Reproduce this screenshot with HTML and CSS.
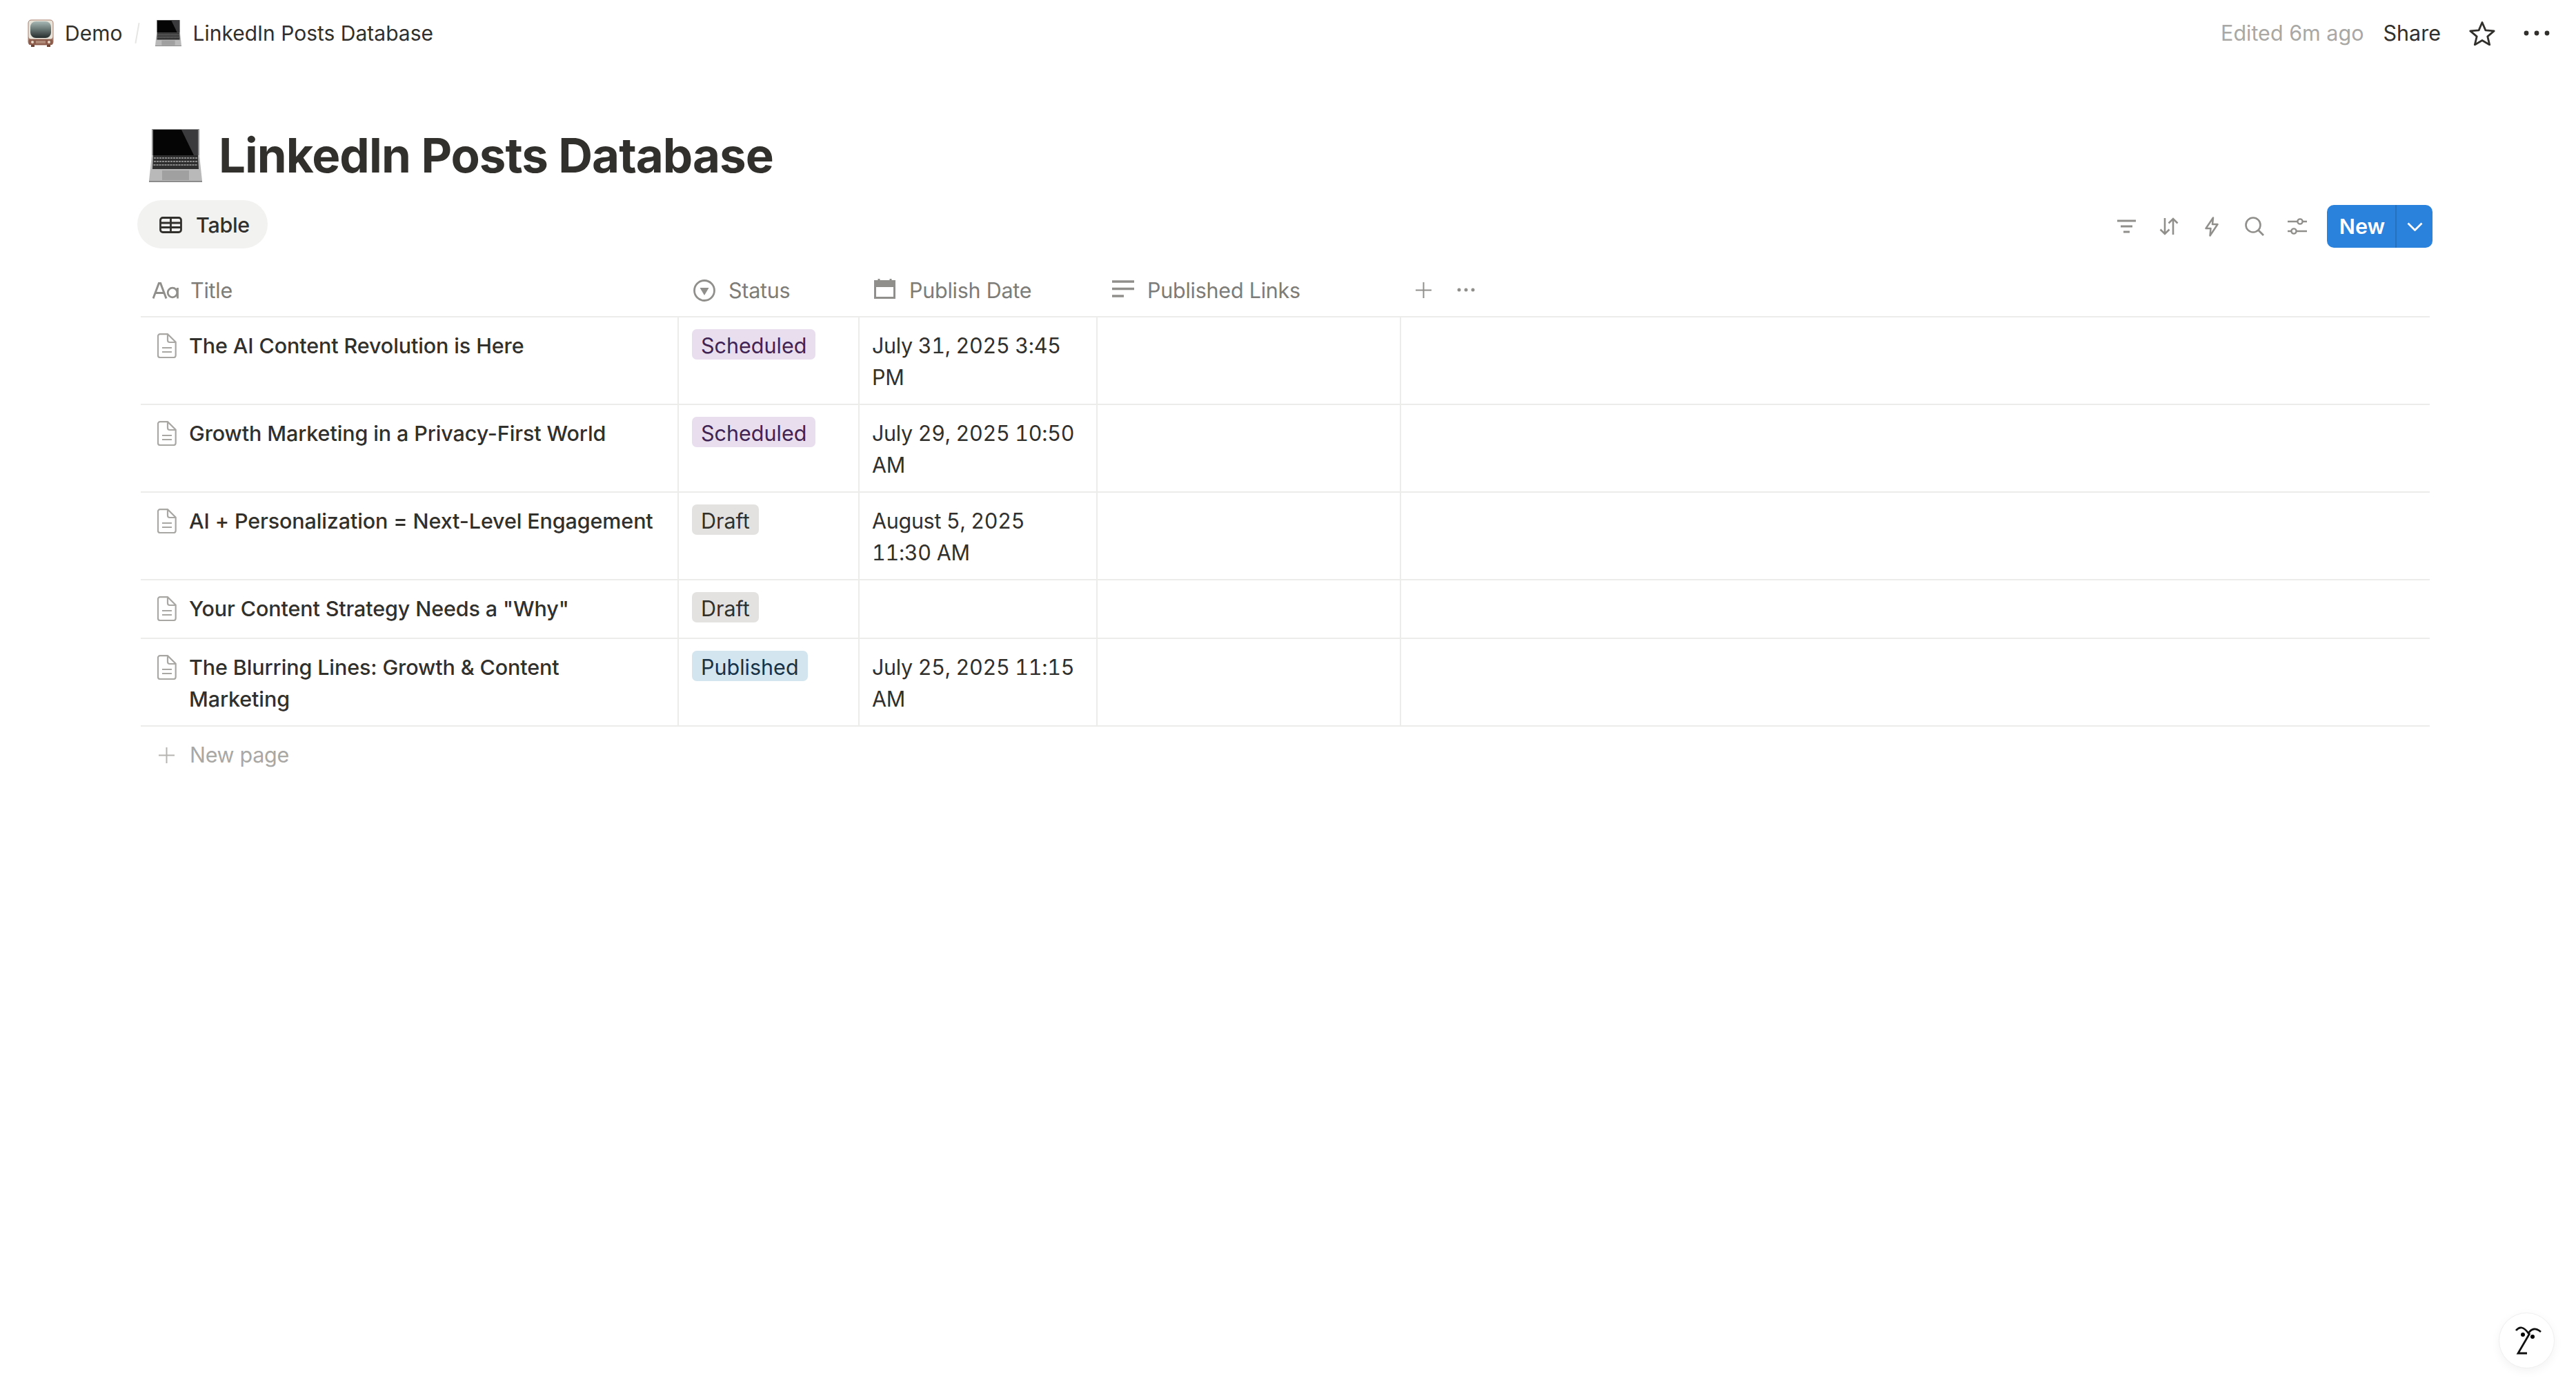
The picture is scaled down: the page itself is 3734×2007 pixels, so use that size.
FILE: index.html
```html
<!DOCTYPE html>
<html lang="en">
<head>
<meta charset="utf-8">
<title>LinkedIn Posts Database</title>
<link rel="stylesheet" href="styles.css">
</head>
<body>
<header class="topbar">
  <nav class="crumbs">
    <svg class="crumb-icon" viewBox="0 0 38 40"><defs><linearGradient id="tvscreen" x1="0" y1="0" x2="0" y2="1"><stop offset="0" stop-color="#a8b8b4"/><stop offset="0.45" stop-color="#6c7b78"/><stop offset="1" stop-color="#262c2c"/></linearGradient></defs><rect x="0.500" y="0.500" width="37" height="37" rx="5" fill="#a87f6e"/><rect x="1.500" y="1.500" width="35" height="27" rx="4" fill="#e9e4da"/><rect x="4" y="3" width="30" height="24" rx="8" fill="url(#tvscreen)"/><rect x="1.500" y="29" width="35" height="8" rx="2" fill="#8c5d4c"/><rect x="12" y="31" width="14" height="4" fill="#b08a78"/><circle cx="7" cy="33" r="2" fill="#e8d8c8"/><circle cx="31" cy="33" r="2" fill="#e8d8c8"/><rect x="5" y="37" width="5" height="3" fill="#6b4436"/><rect x="28" y="37" width="5" height="3" fill="#6b4436"/></svg>
    <span class="crumb-text">Demo</span>
    <span class="crumb-sep"></span>
    <svg class="crumb-icon" viewBox="0 0 77 77"><use href="#laptop"/></svg>
    <span class="crumb-text">LinkedIn Posts Database</span>
  </nav>
  <div class="top-actions">
    <span class="edited">Edited 6m ago</span>
    <span class="share">Share</span>
    <svg class="star" viewBox="0 0 38 36"><path d="M19 2.500l4.900 11.400 12.300 1-9.400 8 2.900 12-10.700-6.400-10.700 6.400 2.900-12-9.400-8 12.300-1z" fill="none" stroke="#32302c" stroke-width="2.800" stroke-linejoin="round"/></svg>
    <svg class="more" viewBox="0 0 38 8"><circle cx="4" cy="4" r="3.400"/><circle cx="19" cy="4" r="3.400"/><circle cx="34" cy="4" r="3.400"/></svg>
  </div>
</header>

<svg class="defs" width="0" height="0" aria-hidden="true">
  <symbol id="laptop" viewBox="0 0 77 77">
    <rect x="4" y="0" width="69" height="38" fill="#8f8f8f"/>
    <path d="M6 1h65v37H6z" fill="#050505"/>
    <path d="M47 1h24v37h-6z" fill="#3b3b3d"/>
    <path d="M4 38h69l4 37H0z" fill="#b9b9b9"/>
    <path d="M6 38h65l1 20H5z" fill="#2e2e2e"/>
    <path d="M7 42h63M7 47h63M6.500 52h64" stroke="#8a8a8a" stroke-width="2" stroke-dasharray="3 1"/>
    <rect x="19" y="60" width="39" height="14" fill="#a0a0a0"/>
    <path d="M0 75h77v2H0z" fill="#8b8b8b"/>
  </symbol>
  <symbol id="doc" viewBox="0 0 28 36">
    <path d="M4 1.200h11l11.700 11.500v19.300a3 3 0 0 1-3 3H4a3 3 0 0 1-3-3V4.200a3 3 0 0 1 3-3z" fill="none" stroke="#a8a7a4" stroke-width="2.200"/>
    <path d="M15 1.500v8.500a3 3 0 0 0 3 3h8.500M7 21h14M7 27h14" fill="none" stroke="#a8a7a4" stroke-width="2.200"/>
  </symbol>
</svg>

<main class="page">
  <h1 class="page-title">
    <svg class="title-icon" viewBox="0 0 77 77"><use href="#laptop"/></svg>
    <span>LinkedIn Posts Database</span>
  </h1>

  <div class="toolbar">
    <div class="view-tab">
      <svg class="tab-icon" viewBox="0 0 33 24"><rect x="1.500" y="1.500" width="30" height="21" rx="3.500" fill="none" stroke="#32302c" stroke-width="2.800"/><path d="M1.500 9h30M1.500 15.500h30M16.500 1.500v21" stroke="#32302c" stroke-width="2.800"/></svg>
      <span>Table</span>
    </div>
    <div class="tools">
      <span class="tool"><svg width="27" height="20" viewBox="0 0 27 20"><path d="M0 2h27M5 10h17M9 18h9" stroke="#908f8c" stroke-width="3"/></svg></span>
      <span class="tool"><svg width="28" height="26" viewBox="0 0 28 26"><path d="M8 1v23M1.500 17.500L8 24l6.500-6.500M20 25V2M13.500 8.500L20 2l6.500 6.500" fill="none" stroke="#908f8c" stroke-width="2.600"/></svg></span>
      <span class="tool"><svg width="20" height="29" viewBox="0 0 20 29"><path d="M12 1.500L1.500 17h7l-1 10.500L18.500 11h-7.500z" fill="none" stroke="#908f8c" stroke-width="2.500" stroke-linejoin="round"/></svg></span>
      <span class="tool"><svg width="28" height="28" viewBox="0 0 28 28"><circle cx="12" cy="12" r="10.500" fill="none" stroke="#908f8c" stroke-width="2.600"/><path d="M19.500 19.500L27 27" stroke="#908f8c" stroke-width="2.800"/></svg></span>
      <span class="tool"><svg width="28" height="24" viewBox="0 0 28 24"><path d="M0 5h14M22 5h6M0 19h5M13 19h15" stroke="#908f8c" stroke-width="2.600"/><circle cx="18" cy="5" r="3.600" fill="none" stroke="#908f8c" stroke-width="2.400"/><circle cx="9" cy="19" r="3.600" fill="none" stroke="#908f8c" stroke-width="2.400"/></svg></span>
      <div class="new-btn">
        <span class="new-label">New</span>
        <span class="new-arrow"><svg width="23" height="13" viewBox="0 0 23 13"><path d="M1.500 1.500l10 10 10-10" fill="none" stroke="#fff" stroke-width="2.800"/></svg></span>
      </div>
    </div>
  </div>

  <section class="table">
    <div class="row head">
      <div class="hcell"><svg class="h-aa" viewBox="0 0 38 24"><path d="M1 23.500L9.500 1h2L20 23.500M5 15.500h11" fill="none" stroke="#908f8c" stroke-width="3"/><circle cx="29" cy="15" r="6.800" fill="none" stroke="#908f8c" stroke-width="2.800"/><path d="M36.500 8v15.500" stroke="#908f8c" stroke-width="2.800"/></svg><span>Title</span></div>
      <div class="hcell status-h"><svg class="h-status" viewBox="0 0 32 32"><circle cx="16" cy="16" r="14.500" fill="none" stroke="#908f8c" stroke-width="2.800"/><path d="M9.500 12h13L16 23z" fill="#908f8c"/></svg><span>Status</span></div>
      <div class="hcell date-h"><svg class="h-cal" viewBox="0 0 31 29"><path d="M7 0v4M24 0v4" stroke="#908f8c" stroke-width="3"/><rect x="1.500" y="3.500" width="28" height="24" fill="none" stroke="#908f8c" stroke-width="3"/><rect x="0" y="3" width="31" height="9" fill="#908f8c"/></svg><span>Publish Date</span></div>
      <div class="hcell links-h"><svg class="h-links" viewBox="0 0 32 25"><path d="M0 2h32M0 12.500h32M0 23h17" stroke="#908f8c" stroke-width="3.400"/></svg><span>Published Links</span></div>
      <div class="hcell add-h">
        <svg class="h-plus" viewBox="0 0 23 23"><path d="M11.500 0v23M0 11.500h23" stroke="#908f8c" stroke-width="2"/></svg>
        <svg class="h-dots" viewBox="0 0 26 6"><circle cx="3" cy="3" r="2.500"/><circle cx="13" cy="3" r="2.500"/><circle cx="23" cy="3" r="2.500"/></svg>
      </div>
    </div>

    <div class="row">
      <div class="cell title-cell"><svg class="doc"><use href="#doc"/></svg><span>The AI Content Revolution is Here</span></div>
      <div class="cell pill-cell"><span class="pill scheduled">Scheduled</span></div>
      <div class="cell date-cell">July 31, 2025 3:45 PM</div>
      <div class="cell"></div>
      <div class="cell last"></div>
    </div>
    <div class="row">
      <div class="cell title-cell"><svg class="doc"><use href="#doc"/></svg><span>Growth Marketing in a Privacy-First World</span></div>
      <div class="cell pill-cell"><span class="pill scheduled">Scheduled</span></div>
      <div class="cell date-cell">July 29, 2025 10:50 AM</div>
      <div class="cell"></div>
      <div class="cell last"></div>
    </div>
    <div class="row">
      <div class="cell title-cell"><svg class="doc"><use href="#doc"/></svg><span>AI + Personalization = Next-Level Engagement</span></div>
      <div class="cell pill-cell"><span class="pill draft">Draft</span></div>
      <div class="cell date-cell">August 5, 2025 11:30 AM</div>
      <div class="cell"></div>
      <div class="cell last"></div>
    </div>
    <div class="row">
      <div class="cell title-cell"><svg class="doc"><use href="#doc"/></svg><span>Your Content Strategy Needs a "Why"</span></div>
      <div class="cell pill-cell"><span class="pill draft">Draft</span></div>
      <div class="cell date-cell"></div>
      <div class="cell"></div>
      <div class="cell last"></div>
    </div>
    <div class="row">
      <div class="cell title-cell"><svg class="doc"><use href="#doc"/></svg><span>The Blurring Lines: Growth &amp; Content Marketing</span></div>
      <div class="cell pill-cell"><span class="pill published">Published</span></div>
      <div class="cell date-cell">July 25, 2025 11:15 AM</div>
      <div class="cell"></div>
      <div class="cell last"></div>
    </div>

    <div class="new-page">
      <svg class="np-plus" viewBox="0 0 23 23"><path d="M11.500 0v23M0 11.500h23" stroke="#b5b4b1" stroke-width="2"/></svg>
      <span>New page</span>
    </div>
  </section>
</main>

<button class="help" type="button" aria-label="Help">
  <svg width="81" height="81" viewBox="0 0 81 81"><path d="M25 26Q33 16 43 30Q50 19 61 28M45 30L28 59H41" fill="none" stroke="#111" stroke-width="2.800" stroke-linejoin="miter"/><circle cx="35" cy="32" r="3"/><circle cx="49" cy="35" r="3"/></svg>
</button>
</body>
</html>
```

FILE: styles.css
```css
* { box-sizing: border-box; }

html, body {
  margin: 0;
  height: 100%;
  background: #fff;
}

body {
  font-family: "Inter", "Liberation Sans", sans-serif;
  font-size: 30.5px;
  line-height: 46px;
  color: #32302c;
  overflow: hidden;
}

.topbar {
  display: flex;
  justify-content: space-between;
  align-items: center;
  height: 96px;
  padding: 0 38px 0 40px;
}

.crumbs,
.top-actions {
  display: flex;
  align-items: center;
}

.crumb-icon {
  width: 38px;
  height: 40px;
  margin-right: 16px;
}

.crumb-text { font-size: 30px; }

.crumb-sep {
  width: 2px;
  height: 30px;
  margin: 0 25px 0 21px;
  background: #e6e6e4;
  transform: rotate(10deg);
}

.edited { color: #a9a8a5; }

.share { margin-left: 28px; }

.star {
  width: 38px;
  height: 36px;
  margin-left: 41px;
}

.more {
  width: 38px;
  height: 8px;
  margin-left: 41px;
  fill: #32302c;
}

.defs { position: absolute; }

.page { padding: 84px 208px 0 199px; }

.page-title {
  display: flex;
  align-items: center;
  gap: 24px;
  height: 90px;
  margin: 0 0 20px;
  padding-left: 17px;
  font-size: 69px;
  line-height: 90px;
  letter-spacing: -1px;
  font-weight: 700;
  color: #32302c;
}

.title-icon {
  width: 77px;
  height: 77px;
}

.toolbar {
  display: flex;
  justify-content: space-between;
  align-items: center;
  height: 70px;
}

.view-tab {
  display: flex;
  align-items: center;
  gap: 20px;
  height: 70px;
  padding: 1px 26px 0 32px;
  border-radius: 35px;
  background: #f2f2f1;
  font-weight: 500;
  letter-spacing: -0.3px;
}

.tab-icon {
  width: 33px;
  height: 24px;
}

.tools {
  display: flex;
  align-items: center;
  padding-top: 6px;
}

.tool {
  display: flex;
  justify-content: center;
  align-items: center;
  width: 62px;
  height: 62px;
}

.new-btn {
  display: flex;
  height: 62px;
  margin-left: 12px;
  border-radius: 10px;
  background: #2b82dc;
  color: #fff;
  font-weight: 600;
}

.new-label {
  display: flex;
  align-items: center;
  justify-content: center;
  width: 101px;
  padding-left: 3px;
  border-right: 2px solid #2671be;
}

.new-arrow {
  display: flex;
  align-items: center;
  justify-content: center;
  width: 52px;
}

.table {
  margin: 0 4px 0 5px;
}

.row {
  display: grid;
  grid-template-columns: 780px 262px 345px 440px 1fr;
  border-bottom: 2px solid #ececeb;
}

.head {
  height: 100px;
  padding-top: 38px;
  color: #7d7c78;
  letter-spacing: -0.25px;
}

.hcell {
  display: flex;
  align-items: center;
  height: 46px;
}

.h-aa { width: 38px; height: 24px; margin: 0 17px 0 17px; }
.status-h { padding-left: 21px; }
.h-status { width: 32px; height: 32px; margin-right: 19px; }
.date-h { padding-left: 21px; }
.h-cal { width: 31px; height: 29px; margin: -6px 20px 0 0; }
.links-h { padding-left: 21px; }
.h-links { width: 32px; height: 25px; margin: -5px 19px 0 0; }
.add-h { padding-left: 21px; margin-top: -1px; }
.h-plus { width: 23px; height: 23px; }
.h-dots { width: 26px; height: 6px; margin-left: 37px; fill: #908f8c; }

.cell {
  padding: 18px 18px 15px;
  border-right: 2px solid #ececeb;
}

.cell.last { border-right: 0; }

.title-cell {
  display: flex;
  align-items: flex-start;
  padding-left: 24px;
  padding-right: 22px;
  font-weight: 450;
  letter-spacing: -0.12px;
}

.doc {
  flex: none;
  width: 28px;
  height: 36px;
  margin: 5px 18px 0 0;
}

.pill-cell { padding: 17px 18px 20px 19px; }

.date-cell {
  font-variant-numeric: tabular-nums;
  letter-spacing: -0.3px;
}

.pill {
  display: inline-block;
  height: 44px;
  padding: 0 13px;
  border-radius: 7px;
  line-height: 47px;
  vertical-align: top;
}

.scheduled { background: #e8deee; color: #412454; }
.draft { background: #e3e2e0; color: #32302c; }
.published { background: #d3e5ef; color: #183347; }

.new-page {
  display: flex;
  align-items: center;
  height: 64px;
  margin-top: 9px;
  padding-left: 26px;
  color: #a9a8a5;
  letter-spacing: -0.3px;
}

.np-plus {
  width: 23px;
  height: 23px;
  margin-right: 22px;
}

.help {
  position: fixed;
  right: 31px;
  bottom: 24px;
  width: 81px;
  height: 81px;
  padding: 0;
  border: 1px solid #eeeeee;
  border-radius: 50%;
  background: #fff;
  box-shadow: 0 4px 14px rgba(0, 0, 0, 0.05);
}

.help svg { display: block; margin: -1px; }
```
